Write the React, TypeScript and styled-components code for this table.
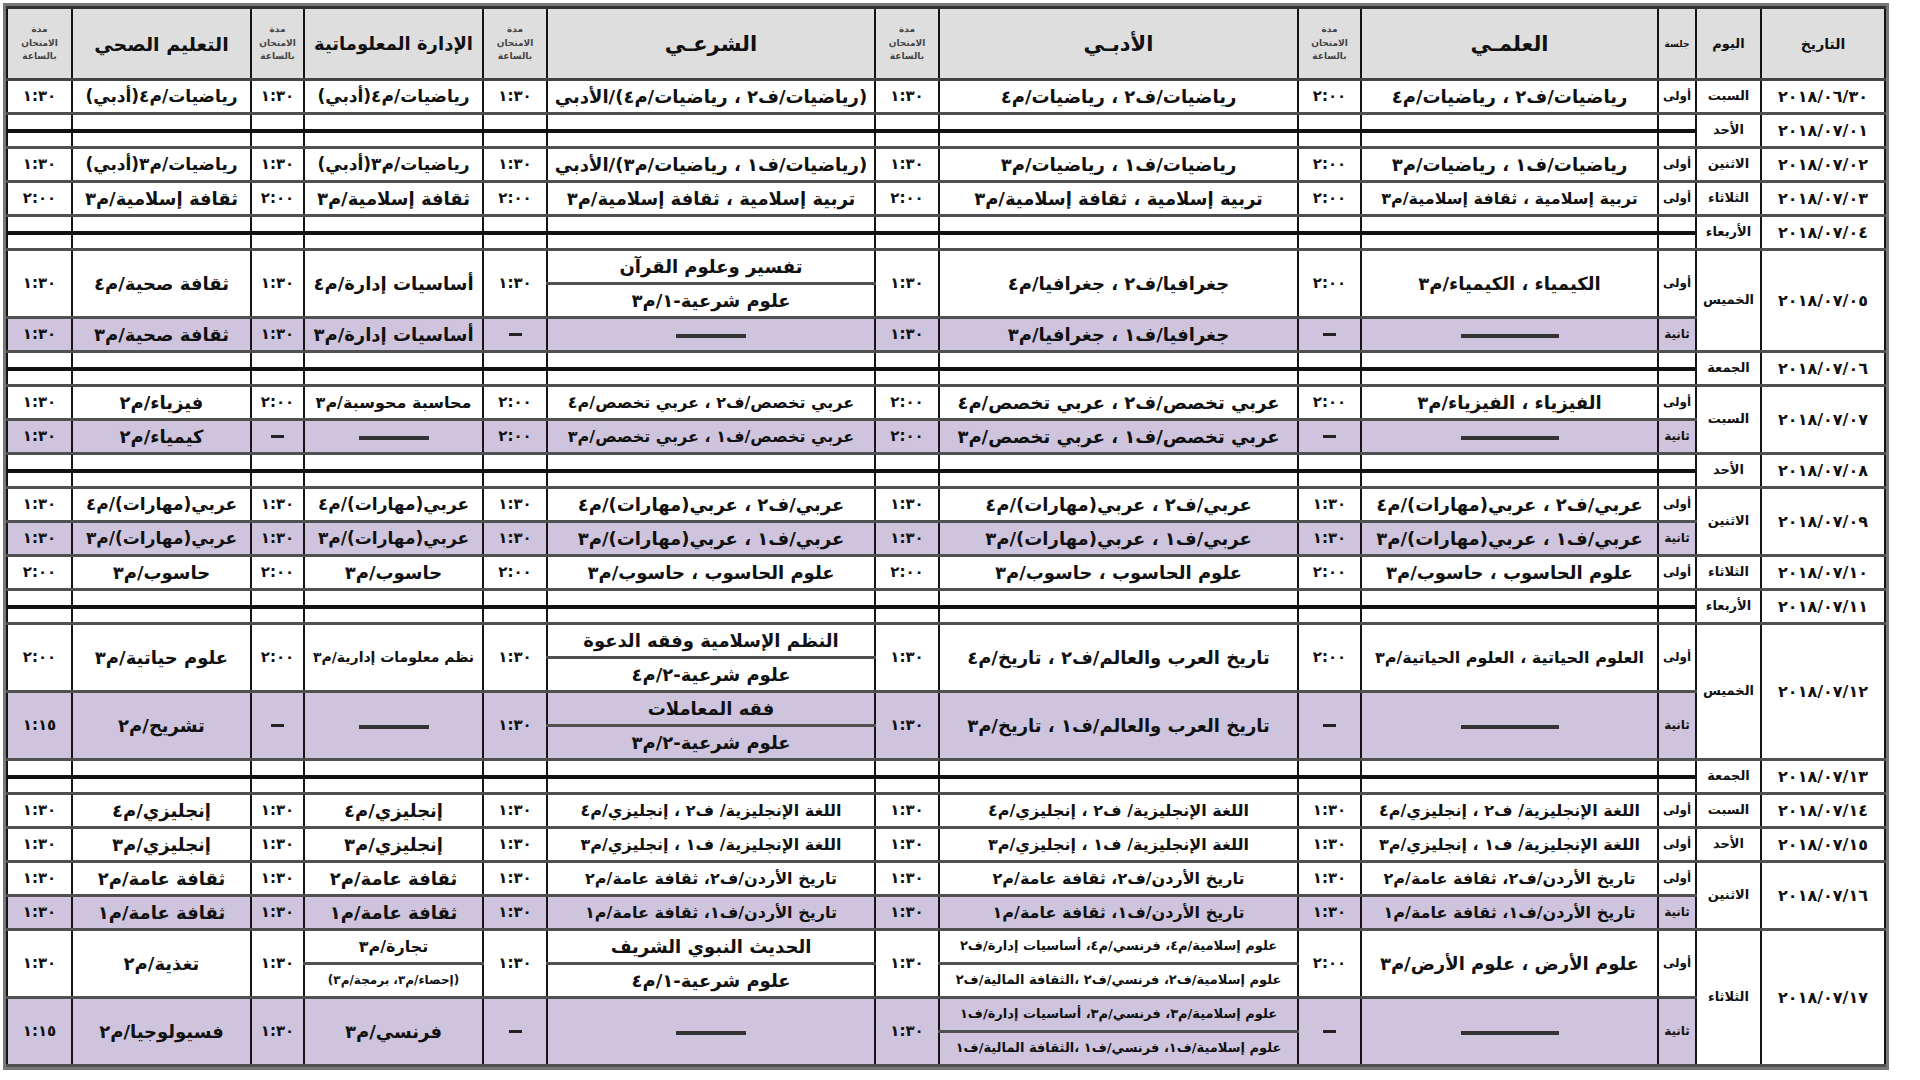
import React from 'react'
import styled, { createGlobalStyle } from 'styled-components'

const GlobalStyle = createGlobalStyle`
  html, body {
    margin: 0;
    background: #fff;
  }
  body {
    font-family: "DejaVu Sans", "Liberation Sans", sans-serif;
    color: #111;
  }
`

type Text = string | [string, string]
type Size = number | [number, number]
type Subject = { t: Text; d: string; sm?: Size }
type Session = { label: string; tall?: boolean; alt?: boolean; subjects: Subject[] }
type Day = { date: string; day: string; sessions: Session[] }

const D2 = '٢:٠٠'
const D13 = '١:٣٠'
const D115 = '١:١٥'
const NO = '-'
const BAR = '---'

const s = (t: Text, d: string, sm?: Size): Subject => ({ t, d, sm })
const same = (t: string, n: number, d: string, sm?: number) => Array.from({ length: n }, () => s(t, d, sm))

const days: Day[] = [
  {
    date: '٢٠١٨/٠٦/٣٠', day: 'السبت', sessions: [
      { label: 'أولى', subjects: [
        s('رياضيات/ف٢ ، رياضيات/م٤', D2),
        s('رياضيات/ف٢ ، رياضيات/م٤', D13),
        s('(رياضيات/ف٢ ، رياضيات/م٤)/الأدبي', D13),
        s('رياضيات/م٤(أدبي)', D13, 17),
        s('رياضيات/م٤(أدبي)', D13, 17),
      ] },
    ],
  },
  { date: '٢٠١٨/٠٧/٠١', day: 'الأحد', sessions: [] },
  {
    date: '٢٠١٨/٠٧/٠٢', day: 'الاثنين', sessions: [
      { label: 'أولى', subjects: [
        s('رياضيات/ف١ ، رياضيات/م٣', D2),
        s('رياضيات/ف١ ، رياضيات/م٣', D13),
        s('(رياضيات/ف١ ، رياضيات/م٣)/الأدبي', D13),
        s('رياضيات/م٣(أدبي)', D13, 17),
        s('رياضيات/م٣(أدبي)', D13, 17),
      ] },
    ],
  },
  {
    date: '٢٠١٨/٠٧/٠٣', day: 'الثلاثاء', sessions: [
      { label: 'أولى', subjects: [
        s('تربية إسلامية ، ثقافة إسلامية/م٣', D2, 16),
        s('تربية إسلامية ، ثقافة إسلامية/م٣', D2),
        s('تربية إسلامية ، ثقافة إسلامية/م٣', D2),
        s('ثقافة إسلامية/م٣', D2),
        s('ثقافة إسلامية/م٣', D2),
      ] },
    ],
  },
  { date: '٢٠١٨/٠٧/٠٤', day: 'الأربعاء', sessions: [] },
  {
    date: '٢٠١٨/٠٧/٠٥', day: 'الخميس', sessions: [
      { label: 'أولى', tall: true, subjects: [
        s('الكيمياء ، الكيمياء/م٣', D2),
        s('جغرافيا/ف٢ ، جغرافيا/م٤', D13),
        s(['تفسير وعلوم القرآن', 'علوم شرعية-١/م٣'], D13),
        s('أساسيات إدارة/م٤', D13),
        s('ثقافة صحية/م٤', D13),
      ] },
      { label: 'ثانية', alt: true, subjects: [
        s(BAR, NO),
        s('جغرافيا/ف١ ، جغرافيا/م٣', D13),
        s(BAR, NO),
        s('أساسيات إدارة/م٣', D13),
        s('ثقافة صحية/م٣', D13),
      ] },
    ],
  },
  { date: '٢٠١٨/٠٧/٠٦', day: 'الجمعة', sessions: [] },
  {
    date: '٢٠١٨/٠٧/٠٧', day: 'السبت', sessions: [
      { label: 'أولى', subjects: [
        s('الفيزياء ، الفيزياء/م٣', D2),
        s('عربي تخصص/ف٢ ، عربي تخصص/م٤', D2),
        s('عربي تخصص/ف٢ ، عربي تخصص/م٤', D2, 16),
        s('محاسبة محوسبة/م٣', D2, 16),
        s('فيزياء/م٢', D13),
      ] },
      { label: 'ثانية', alt: true, subjects: [
        s(BAR, NO),
        s('عربي تخصص/ف١ ، عربي تخصص/م٣', D2),
        s('عربي تخصص/ف١ ، عربي تخصص/م٣', D2, 16),
        s(BAR, NO),
        s('كيمياء/م٢', D13),
      ] },
    ],
  },
  { date: '٢٠١٨/٠٧/٠٨', day: 'الأحد', sessions: [] },
  {
    date: '٢٠١٨/٠٧/٠٩', day: 'الاثنين', sessions: [
      { label: 'أولى', subjects: [
        ...same('عربي/ف٢ ، عربي(مهارات)/م٤', 3, D13),
        ...same('عربي(مهارات)/م٤', 2, D13, 17),
      ] },
      { label: 'ثانية', alt: true, subjects: [
        ...same('عربي/ف١ ، عربي(مهارات)/م٣', 3, D13),
        ...same('عربي(مهارات)/م٣', 2, D13, 17),
      ] },
    ],
  },
  {
    date: '٢٠١٨/٠٧/١٠', day: 'الثلاثاء', sessions: [
      { label: 'أولى', subjects: [
        ...same('علوم الحاسوب ، حاسوب/م٣', 3, D2),
        ...same('حاسوب/م٣', 2, D2),
      ] },
    ],
  },
  { date: '٢٠١٨/٠٧/١١', day: 'الأربعاء', sessions: [] },
  {
    date: '٢٠١٨/٠٧/١٢', day: 'الخميس', sessions: [
      { label: 'أولى', tall: true, subjects: [
        s('العلوم الحياتية ، العلوم الحياتية/م٣', D2, 16),
        s('تاريخ العرب والعالم/ف٢ ، تاريخ/م٤', D13),
        s(['النظم الإسلامية وفقه الدعوة', 'علوم شرعية-٢/م٤'], D13),
        s('نظم معلومات إدارية/م٣', D2, 14),
        s('علوم حياتية/م٣', D2),
      ] },
      { label: 'ثانية', tall: true, alt: true, subjects: [
        s(BAR, NO),
        s('تاريخ العرب والعالم/ف١ ، تاريخ/م٣', D13),
        s(['فقه المعاملات', 'علوم شرعية-٢/م٣'], D13),
        s(BAR, NO),
        s('تشريح/م٢', D115),
      ] },
    ],
  },
  { date: '٢٠١٨/٠٧/١٣', day: 'الجمعة', sessions: [] },
  {
    date: '٢٠١٨/٠٧/١٤', day: 'السبت', sessions: [
      { label: 'أولى', subjects: [
        ...same('اللغة الإنجليزية/ ف٢ ، إنجليزي/م٤', 3, D13, 16),
        ...same('إنجليزي/م٤', 2, D13),
      ] },
    ],
  },
  {
    date: '٢٠١٨/٠٧/١٥', day: 'الأحد', sessions: [
      { label: 'أولى', subjects: [
        ...same('اللغة الإنجليزية/ ف١ ، إنجليزي/م٣', 3, D13, 16),
        ...same('إنجليزي/م٣', 2, D13),
      ] },
    ],
  },
  {
    date: '٢٠١٨/٠٧/١٦', day: 'الاثنين', sessions: [
      { label: 'أولى', subjects: [
        ...same('تاريخ الأردن/ف٢، ثقافة عامة/م٢', 3, D13, 16),
        ...same('ثقافة عامة/م٢', 2, D13),
      ] },
      { label: 'ثانية', alt: true, subjects: [
        ...same('تاريخ الأردن/ف١، ثقافة عامة/م١', 3, D13, 16),
        ...same('ثقافة عامة/م١', 2, D13),
      ] },
    ],
  },
  {
    date: '٢٠١٨/٠٧/١٧', day: 'الثلاثاء', sessions: [
      { label: 'أولى', tall: true, subjects: [
        s('علوم الأرض ، علوم الأرض/م٣', D2),
        s(['علوم إسلامية/م٤، فرنسي/م٤، أساسيات إدارة/ف٢', 'علوم إسلامية/ف٢، فرنسي/ف٢ ،الثقافة المالية/ف٢'], D13, 13),
        s(['الحديث النبوي الشريف', 'علوم شرعية-١/م٤'], D13),
        s(['تجارة/م٣', '(إحصاء/م٣، برمجة/م٣)'], D13, [16, 12]),
        s('تغذية/م٢', D13),
      ] },
      { label: 'ثانية', tall: true, alt: true, subjects: [
        s(BAR, NO),
        s(['علوم إسلامية/م٣، فرنسي/م٣، أساسيات إدارة/ف١', 'علوم إسلامية/ف١، فرنسي/ف١ ،الثقافة المالية/ف١'], D13, 13),
        s(BAR, NO),
        s('فرنسي/م٣', D13),
        s('فسيولوجيا/م٢', D115),
      ] },
    ],
  },
]

// column widths, right to left (table is rtl)
const cols = [124, 65, 38, 297, 63, 359, 64, 328, 64, 179, 53, 179, 65]
const barWidths = [98, 70, 70, 70, 70]

const UNIT = 34

const sizeOf = (sm: Size | undefined, part: 0 | 1) =>
  Array.isArray(sm) ? sm[part] : sm

function App() {
  return (
    <Page>
      <GlobalStyle />
      <Frame>
        <Table dir="rtl">
          <colgroup>
            {cols.map((w, i) => <Col key={i} $w={w} />)}
          </colgroup>
          <thead>
            <Row $h={72}>
              <HeadCell $size={14}>التاريخ</HeadCell>
              <HeadCell $size={13}>اليوم</HeadCell>
              <HeadCell $size={9}>جلسة</HeadCell>
              <HeadCell>العلمـي</HeadCell>
              <DurHead />
              <HeadCell>الأدبـي</HeadCell>
              <DurHead />
              <HeadCell>الشرعـي</HeadCell>
              <DurHead />
              <HeadCell $size={18}>الإدارة المعلوماتية</HeadCell>
              <DurHead />
              <HeadCell $size={19}>التعليم الصحي</HeadCell>
              <DurHead />
            </Row>
          </thead>
          <tbody>
            {days.map((d) => <DayRows key={d.date} day={d} />)}
          </tbody>
        </Table>
      </Frame>
    </Page>
  )
}

function DurHead() {
  return (
    <HeadCell $size={9}>
      <DurLabel>مدة<br />الامتحان<br />بالساعة</DurLabel>
    </HeadCell>
  )
}

function Content({ sub, idx }: { sub: Subject; idx: number }) {
  if (sub.t === BAR) return <Bar $w={barWidths[idx]} />
  return <>{sub.t as string}</>
}

function Duration({ d }: { d: string }) {
  if (d === NO) return <Dash />
  return <>{d}</>
}

function DayRows({ day }: { day: Day }) {
  if (!day.sessions.length) {
    return (
      <>
        <Row $h={17}>
          <DateCell rowSpan={2}>{day.date}</DateCell>
          <DayCell rowSpan={2}>{day.day}</DayCell>
          {cols.slice(2).map((_, i) => <Cell key={i} />)}
        </Row>
        <Row $h={17}>
          {cols.slice(2).map((_, i) => <Cell key={i} $cut />)}
        </Row>
      </>
    )
  }

  const rows: React.ReactNode[] = []
  const split = (ses: Session) => ses.tall && ses.subjects.some((x) => Array.isArray(x.t))
  const total = day.sessions.reduce((n, ses) => n + (split(ses) ? 2 : 1), 0)

  day.sessions.forEach((ses, si) => {
    const first: React.ReactNode[] = []
    const second: React.ReactNode[] = []
    const two = split(ses)
    const span = two ? 2 : 1
    if (si === 0) {
      first.push(<DateCell key="date" rowSpan={total}>{day.date}</DateCell>)
      first.push(<DayCell key="day" rowSpan={total}>{day.day}</DayCell>)
    }
    first.push(<SessionCell key="ses" rowSpan={span} $alt={ses.alt}>{ses.label}</SessionCell>)
    ses.subjects.forEach((sub, i) => {
      if (Array.isArray(sub.t)) {
        first.push(<Cell key={`t${i}`} $alt={ses.alt} $size={sizeOf(sub.sm, 0)}>{sub.t[0]}</Cell>)
        second.push(<Cell key={`t${i}`} $alt={ses.alt} $size={sizeOf(sub.sm, 1)}>{sub.t[1]}</Cell>)
      } else {
        first.push(
          <Cell key={`t${i}`} rowSpan={span} $alt={ses.alt} $size={sizeOf(sub.sm, 0)}>
            <Content sub={sub} idx={i} />
          </Cell>
        )
      }
      first.push(
        <DurCell key={`d${i}`} rowSpan={span} $alt={ses.alt}>
          <Duration d={sub.d} />
        </DurCell>
      )
    })
    const h = ses.tall && !two ? UNIT * 2 : UNIT
    rows.push(<Row key={`${si}a`} $h={h}>{first}</Row>)
    if (two) rows.push(<Row key={`${si}b`} $h={UNIT}>{second}</Row>)
  })

  return <>{rows}</>
}

const Page = styled.div`
  padding: 3px 0 0 3px;
`

const Frame = styled.div`
  display: inline-block;
  border: 3px solid #777;
`

const Table = styled.table`
  border-collapse: collapse;
  table-layout: fixed;
  width: 1878px;
  direction: rtl;
`

const Col = styled.col<{ $w: number }>`
  width: ${(p) => p.$w}px;
`

const Row = styled.tr<{ $h: number }>`
  height: ${(p) => p.$h}px;
`

const Cell = styled.td<{ $alt?: boolean; $size?: number; $cut?: boolean }>`
  padding: 0 4px;
  border-left: 2px solid #141414;
  border-right: 2px solid #141414;
  border-top: ${(p) => (p.$cut ? '4px solid #111' : '3px solid #505050')};
  border-bottom: 3px solid #505050;
  background: ${(p) => (p.$alt ? '#cec4de' : '#fff')};
  text-align: center;
  vertical-align: middle;
  white-space: nowrap;
  overflow: hidden;
  font-size: ${(p) => p.$size ?? 18}px;
  font-weight: 700;
  line-height: 1.1;
`

const DurCell = styled(Cell)`
  font-size: 15px;
  letter-spacing: 2.5px;
`

const SessionCell = styled(Cell)`
  padding: 0 1px;
  font-size: 12px;
  letter-spacing: -0.5px;
`

const DateCell = styled(Cell)`
  font-size: 16px;
  letter-spacing: 1px;
`

const DayCell = styled(Cell)`
  padding: 0 2px;
  font-size: 13px;
`

const HeadCell = styled.th<{ $size?: number }>`
  padding: 0 2px;
  border: 2px solid #141414;
  border-top: 3px solid #333;
  border-bottom: 3px solid #444;
  background: #dedede;
  text-align: center;
  vertical-align: middle;
  white-space: nowrap;
  overflow: hidden;
  font-size: ${(p) => p.$size ?? 21}px;
  font-weight: 700;
`

const DurLabel = styled.span`
  display: block;
  font-size: 9px;
  line-height: 1.55;
  color: #444;
`

const Bar = styled.span<{ $w: number }>`
  display: inline-block;
  width: ${(p) => p.$w}px;
  height: 4px;
  background: #333;
  vertical-align: middle;
`

const Dash = styled.span`
  display: inline-block;
  width: 13px;
  height: 3px;
  background: #222;
  vertical-align: middle;
`

export default App
